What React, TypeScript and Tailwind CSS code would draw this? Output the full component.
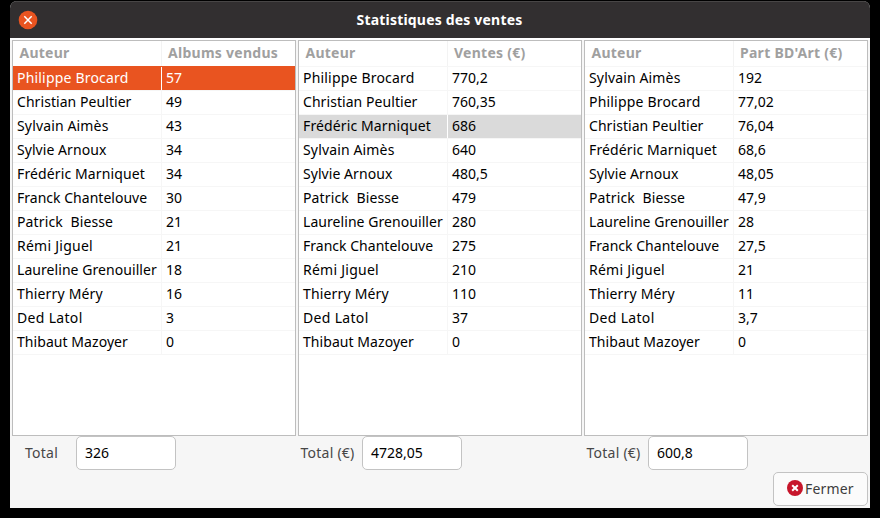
type Row = { name: string; value: string; tone?: 'active' | 'muted' };

type Panel = {
  column: string;
  rows: Row[];
  totalLabel: string;
  total: string;
};

const panels: Panel[] = [
  {
    column: 'Albums vendus',
    totalLabel: 'Total',
    total: '326',
    rows: [
      { name: 'Philippe Brocard', value: '57', tone: 'active' },
      { name: 'Christian Peultier', value: '49' },
      { name: 'Sylvain Aimès', value: '43' },
      { name: 'Sylvie Arnoux', value: '34' },
      { name: 'Frédéric Marniquet', value: '34' },
      { name: 'Franck Chantelouve', value: '30' },
      { name: 'Patrick  Biesse', value: '21' },
      { name: 'Rémi Jiguel', value: '21' },
      { name: 'Laureline Grenouiller', value: '18' },
      { name: 'Thierry Méry', value: '16' },
      { name: 'Ded Latol', value: '3' },
      { name: 'Thibaut Mazoyer', value: '0' },
    ],
  },
  {
    column: 'Ventes (€)',
    totalLabel: 'Total (€)',
    total: '4728,05',
    rows: [
      { name: 'Philippe Brocard', value: '770,2' },
      { name: 'Christian Peultier', value: '760,35' },
      { name: 'Frédéric Marniquet', value: '686', tone: 'muted' },
      { name: 'Sylvain Aimès', value: '640' },
      { name: 'Sylvie Arnoux', value: '480,5' },
      { name: 'Patrick  Biesse', value: '479' },
      { name: 'Laureline Grenouiller', value: '280' },
      { name: 'Franck Chantelouve', value: '275' },
      { name: 'Rémi Jiguel', value: '210' },
      { name: 'Thierry Méry', value: '110' },
      { name: 'Ded Latol', value: '37' },
      { name: 'Thibaut Mazoyer', value: '0' },
    ],
  },
  {
    column: "Part BD'Art (€)",
    totalLabel: 'Total (€)',
    total: '600,8',
    rows: [
      { name: 'Sylvain Aimès', value: '192' },
      { name: 'Philippe Brocard', value: '77,02' },
      { name: 'Christian Peultier', value: '76,04' },
      { name: 'Frédéric Marniquet', value: '68,6' },
      { name: 'Sylvie Arnoux', value: '48,05' },
      { name: 'Patrick  Biesse', value: '47,9' },
      { name: 'Laureline Grenouiller', value: '28' },
      { name: 'Franck Chantelouve', value: '27,5' },
      { name: 'Rémi Jiguel', value: '21' },
      { name: 'Thierry Méry', value: '11' },
      { name: 'Ded Latol', value: '3,7' },
      { name: 'Thibaut Mazoyer', value: '0' },
    ],
  },
];

const tones = {
  active: 'bg-[#e95420] text-white border-[#e95420]',
  muted: 'bg-[#dadada] text-black border-[#f6f6f6]',
  plain: 'text-black border-[#f6f6f6]',
};

const nameTracking: Record<string, string> = {
  'Philippe Brocard': 'tracking-[0.19px]',
  'Sylvain Aimès': 'tracking-[0.15px]',
  'Frédéric Marniquet': 'tracking-[0.12px]',
  'Patrick  Biesse': 'tracking-[0.13px]',
  'Rémi Jiguel': 'tracking-[0.25px]',
  'Thierry Méry': 'tracking-[0.17px]',
  'Ded Latol': 'tracking-[0.32px]',
  'Franck Chantelouve': 'tracking-[0.02px]',
};

function SalesTable({ panel }: { panel: Panel }) {
  return (
    <div className="h-[396px] w-[284px] border border-[#bdbdbd] bg-white">
      <div className="flex h-[25px] text-[14px] leading-[24px] font-bold text-[#a0a09f]">
        <div className="w-[149px] border-r border-[#f3f3f3] pl-[6.5px] tracking-[0.25px]">Auteur</div>
        <div className="pl-1.5 tracking-[0.27px]">{panel.column}</div>
      </div>
      <div className="border-b border-[#f6f6f6]">
        {panel.rows.map((row) => (
          <div key={row.name} className={`flex h-6 border-t leading-[22px] ${tones[row.tone ?? 'plain']}`}>
            <div
              className={`w-[149px] border-r pl-1 whitespace-pre ${row.tone ? 'border-white' : 'border-[#f6f6f6]'} ${nameTracking[row.name] ?? 'tracking-[0.06px]'}`}
            >
              {row.name}
            </div>
            <div className="pl-1">{row.value}</div>
          </div>
        ))}
      </div>
    </div>
  );
}

export default function App() {
  return (
    <div className="h-[518px] w-[880px] overflow-hidden bg-black px-[10px] pt-px font-['Noto_Sans',sans-serif] text-[14px]">
      <div className="flex h-[507px] w-[860px] flex-col overflow-hidden rounded-t-[7px] bg-[#f6f6f6]">
        <header className="flex h-[37px] shrink-0 items-center border-t border-[#484646] bg-[#322f30] pl-2">
          <svg width="20" height="20" viewBox="0 0 20 20" aria-hidden="true">
            <circle cx="10" cy="10" r="9.3" fill="#e95420" />
            <path d="M6.3 6.3l7.4 7.4M13.7 6.3l-7.4 7.4" stroke="#fff" strokeWidth="1.5" />
          </svg>
          <h1 className="flex-1 pr-[29px] text-center leading-5 font-bold tracking-[0.19px] text-white">Statistiques des ventes</h1>
        </header>
        <main className="flex gap-0.5 border-t-2 border-white pl-0.5">
          {panels.map((panel) => (
            <section key={panel.column} className="w-[284px]">
              <SalesTable panel={panel} />
              <div className="flex h-[34px] items-center">
                <label className="w-16 pr-[5px] pb-0.5 text-center tracking-[0.25px] whitespace-nowrap text-[#474747]">{panel.totalLabel}</label>
                <output className="h-[34px] w-[100px] rounded-[5px] border border-[#c3c3c3] bg-white pl-2 leading-[32px] text-black">{panel.total}</output>
              </div>
            </section>
          ))}
        </main>
        <footer className="flex justify-end pt-0.5 pr-0.5">
          <button className="flex h-[34px] w-[95px] items-center rounded-[5px] border border-[#c3c3c3] bg-[#fbfbfb] pb-0.5 pl-[13px] text-[#3d3d3d]">
            <svg width="16" height="16" viewBox="0 0 16 16" aria-hidden="true">
              <circle cx="8" cy="8" r="8" fill="#c7162b" />
              <path d="M5.2 5.2l5.6 5.6M10.8 5.2l-5.6 5.6" stroke="#fff" strokeWidth="2" />
            </svg>
            <span className="ml-0.5 tracking-[0.15px]">Fermer</span>
          </button>
        </footer>
      </div>
    </div>
  );
}
